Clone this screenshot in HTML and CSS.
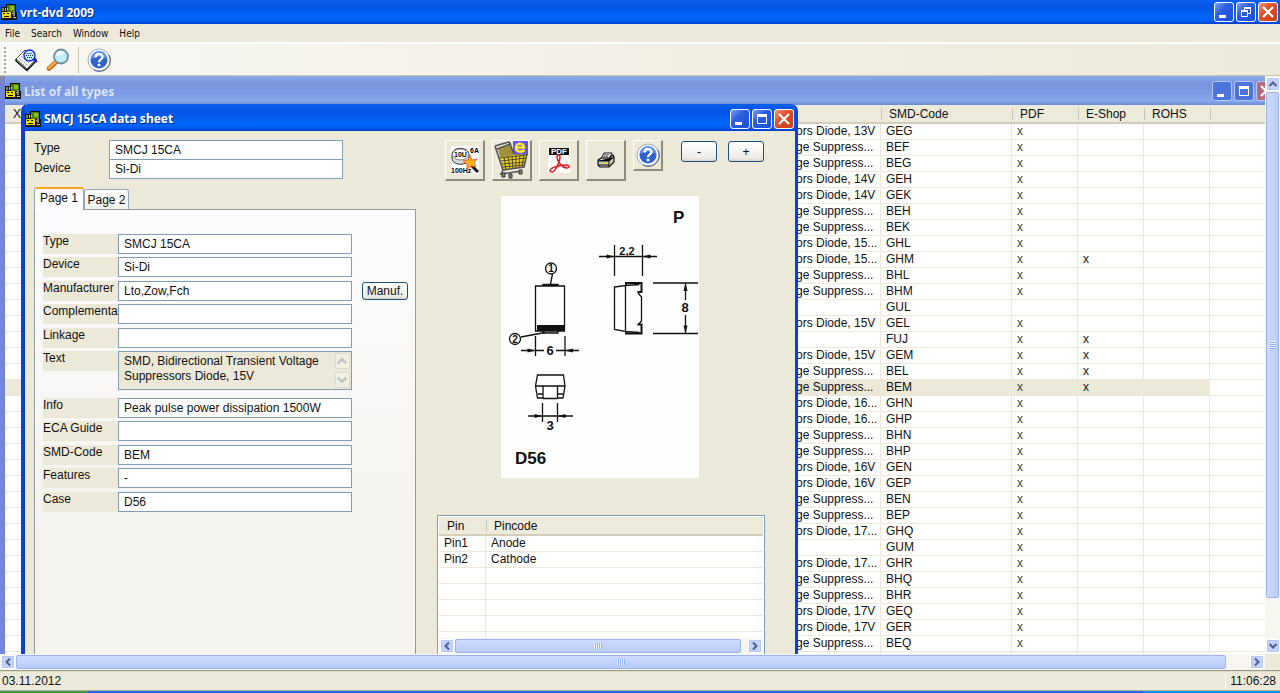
FILE: index.html
```html
<!DOCTYPE html>
<html lang="en">
<head>
    <meta charset="UTF-8">
    <meta name="viewport" content="width=device-width, initial-scale=1.0">
    <title>vrt-dvd 2009</title>
    <link rel="stylesheet" href="styles.css">
</head>
<body>
    <!-- shared icons -->
    <svg class="defs" width="0" height="0" aria-hidden="true">
        <symbol id="app" viewBox="0 0 16 16">
            <path fill="#111" d="M5 0h10v8h1v8H0V3h5z"/>
            <path fill="#4f7d12" d="M6 1h8v7H6z"/>
            <path fill="#8cc01e" d="M9 2h4v4H9z"/>
            <path fill="#ecdc00" d="M1 8h9v6H1z"/>
            <path fill="#8f8a10" d="M1 4h2v3H1z"/>
            <path fill="#111" d="M2 9h2v1H2zM6 9h2v1H6zM3 12h5v1H3z"/>
            <path fill="#c8c8c8" d="M4 4h1v3H4zM6 4h1v2H6zM11 9h3v1h-3zM12 13h3v1h-3z"/>
            <path fill="#858585" d="M12 7h2v5h-2z"/>
        </symbol>
        <symbol id="min" viewBox="0 0 18 18"><path fill="#fff" d="M4 12h7v3H4z"/></symbol>
        <symbol id="max" viewBox="0 0 18 18"><path fill="none" stroke="#fff" d="M4.500 4.500h9v9h-9z"/><path fill="#fff" d="M4 4h10v3H4z"/></symbol>
        <symbol id="restore" viewBox="0 0 18 18"><path fill="none" stroke="#fff" d="M4.500 8.500h6v5h-6zM7.500 7V4.500h6v6H11"/><path fill="#fff" d="M7 4h7v2H7zM4 7h7v2H4z"/></symbol>
        <symbol id="close" viewBox="0 0 18 18"><path stroke="#fff" stroke-width="2.200" d="M4 4l10 10M14 4L4 14"/></symbol>
        <symbol id="up" viewBox="0 0 10 10"><path fill="none" stroke="#4d6185" stroke-width="2" d="M1.500 7L5 3.500 8.500 7"/></symbol>
        <symbol id="down" viewBox="0 0 10 10"><path fill="none" stroke="#4d6185" stroke-width="2" d="M1.500 3L5 6.500 8.500 3"/></symbol>
        <symbol id="left" viewBox="0 0 10 10"><path fill="none" stroke="#4d6185" stroke-width="2" d="M7 1.500L3.500 5 7 8.500"/></symbol>
        <symbol id="right" viewBox="0 0 10 10"><path fill="none" stroke="#4d6185" stroke-width="2" d="M3 1.500L6.500 5 3 8.500"/></symbol>
        <symbol id="help" viewBox="0 0 24 24">
            <circle cx="12" cy="12" r="11" fill="#f4f7fd" stroke="#9aa9c8"/>
            <path fill="none" stroke="#56627c" d="M22 7a11 11 0 0 1-15 15"/>
            <circle cx="12" cy="12" r="8.500" fill="#2e63cc"/>
            <path fill="#5f8fe6" d="M4 11a8 8 0 0 1 16 0c-5-3-11-3-16 0z"/>
            <path fill="none" stroke="#fff" stroke-width="2.400" d="M8.500 9.500c0-4.500 7-4.500 7-.5 0 2.500-3.500 2.300-3.500 5.200"/>
            <path fill="#fff" d="M10.700 15.800h2.600v2.400h-2.600z"/>
        </symbol>
    </svg>

    <header class="titlebar">
        <svg class="icon16"><use href="#app"/></svg>
        <h1>vrt-dvd 2009</h1>
        <button class="cap" aria-label="Minimize"><svg><use href="#min"/></svg></button>
        <button class="cap" aria-label="Restore"><svg><use href="#restore"/></svg></button>
        <button class="cap cap-close" aria-label="Close"><svg><use href="#close"/></svg></button>
    </header>

    <nav class="menubar">
        <button>File</button>
        <button>Search</button>
        <button>Window</button>
        <button>Help</button>
    </nav>

    <div class="toolbar">
        <span class="grip"></span>
        <button class="tool" aria-label="Types">
            <svg viewBox="0 0 24 24">
                <path fill="#fff" stroke="#444" d="M2 11L11 2l11 9-9 10z"/>
                <path fill="none" stroke="#111" stroke-width="1.400" d="M2 11v2l11 9.500L22 13v-2"/>
                <path stroke="#888" stroke-dasharray="2 1" d="M5 10l8 7M7 8l8 7M9 6l8 7M4.500 12.500l7 6"/>
                <circle cx="15.500" cy="7.500" r="5.500" fill="#bdf3ff" stroke="#1426e0" stroke-width="1.400"/>
                <path stroke="#224" stroke-dasharray="1 1" d="M12.500 5.500h6M12 7.500h7M13 9.500h5"/>
                <path stroke="#1426e0" stroke-width="2" d="M19 11l4 3"/>
            </svg>
        </button>
        <button class="tool" aria-label="Search">
            <svg viewBox="0 0 24 24">
                <path stroke="#a8621c" stroke-width="4.500" stroke-linecap="round" d="M10 14l-7 6.500"/>
                <path stroke="#f7a544" stroke-width="3" stroke-linecap="round" d="M9.500 14L3 20"/>
                <circle cx="15" cy="8.500" r="7" fill="#c5ecfa" stroke="#6f8fa6" stroke-width="1.800"/>
                <path fill="#eefaff" d="M10 8a5 5 0 0 1 8-4c-1 3-4 4-8 4z"/>
            </svg>
        </button>
        <span class="sep"></span>
        <button class="tool" aria-label="Help"><svg><use href="#help"/></svg></button>
    </div>

    <main class="mdi">
        <div class="desktop">
            <section class="window list">
                <header class="titlebar inactive">
                    <svg class="icon16"><use href="#app"/></svg>
                    <h2>List of all types</h2>
                    <button class="cap" aria-label="Minimize"><svg><use href="#min"/></svg></button>
                    <button class="cap" aria-label="Maximize"><svg><use href="#max"/></svg></button>
                    <button class="cap cap-close" aria-label="Close"><svg><use href="#close"/></svg></button>
                </header>
                <table class="grid types">
                    <colgroup><col class="c-x"><col class="c-hidden"><col class="c-text"><col class="c-smd"><col class="c-flag"><col class="c-flag"><col class="c-flag"><col></colgroup>
                    <thead>
                        <tr><th>X</th><th></th><th></th><th>SMD-Code</th><th>PDF</th><th>E-Shop</th><th>ROHS</th><th></th></tr>
                    </thead>
                    <tbody>
                        <tr><td></td><td></td><td>ors Diode, 13V</td><td>GEG</td><td>x</td><td></td><td></td><td></td></tr>
                        <tr><td></td><td></td><td>ge Suppress...</td><td>BEF</td><td>x</td><td></td><td></td><td></td></tr>
                        <tr><td></td><td></td><td>ge Suppress...</td><td>BEG</td><td>x</td><td></td><td></td><td></td></tr>
                        <tr><td></td><td></td><td>ors Diode, 14V</td><td>GEH</td><td>x</td><td></td><td></td><td></td></tr>
                        <tr><td></td><td></td><td>ors Diode, 14V</td><td>GEK</td><td>x</td><td></td><td></td><td></td></tr>
                        <tr><td></td><td></td><td>ge Suppress...</td><td>BEH</td><td>x</td><td></td><td></td><td></td></tr>
                        <tr><td></td><td></td><td>ge Suppress...</td><td>BEK</td><td>x</td><td></td><td></td><td></td></tr>
                        <tr><td></td><td></td><td>ors Diode, 15...</td><td>GHL</td><td>x</td><td></td><td></td><td></td></tr>
                        <tr><td></td><td></td><td>ors Diode, 15...</td><td>GHM</td><td>x</td><td>x</td><td></td><td></td></tr>
                        <tr><td></td><td></td><td>ge Suppress...</td><td>BHL</td><td>x</td><td></td><td></td><td></td></tr>
                        <tr><td></td><td></td><td>ge Suppress...</td><td>BHM</td><td>x</td><td></td><td></td><td></td></tr>
                        <tr><td></td><td></td><td></td><td>GUL</td><td></td><td></td><td></td><td></td></tr>
                        <tr><td></td><td></td><td>ors Diode, 15V</td><td>GEL</td><td>x</td><td></td><td></td><td></td></tr>
                        <tr><td></td><td></td><td></td><td>FUJ</td><td>x</td><td>x</td><td></td><td></td></tr>
                        <tr><td></td><td></td><td>ors Diode, 15V</td><td>GEM</td><td>x</td><td>x</td><td></td><td></td></tr>
                        <tr><td></td><td></td><td>ge Suppress...</td><td>BEL</td><td>x</td><td>x</td><td></td><td></td></tr>
                        <tr class="selected"><td></td><td></td><td>ge Suppress...</td><td>BEM</td><td>x</td><td>x</td><td></td><td></td></tr>
                        <tr><td></td><td></td><td>ors Diode, 16...</td><td>GHN</td><td>x</td><td></td><td></td><td></td></tr>
                        <tr><td></td><td></td><td>ors Diode, 16...</td><td>GHP</td><td>x</td><td></td><td></td><td></td></tr>
                        <tr><td></td><td></td><td>ge Suppress...</td><td>BHN</td><td>x</td><td></td><td></td><td></td></tr>
                        <tr><td></td><td></td><td>ge Suppress...</td><td>BHP</td><td>x</td><td></td><td></td><td></td></tr>
                        <tr><td></td><td></td><td>ors Diode, 16V</td><td>GEN</td><td>x</td><td></td><td></td><td></td></tr>
                        <tr><td></td><td></td><td>ors Diode, 16V</td><td>GEP</td><td>x</td><td></td><td></td><td></td></tr>
                        <tr><td></td><td></td><td>ge Suppress...</td><td>BEN</td><td>x</td><td></td><td></td><td></td></tr>
                        <tr><td></td><td></td><td>ge Suppress...</td><td>BEP</td><td>x</td><td></td><td></td><td></td></tr>
                        <tr><td></td><td></td><td>ors Diode, 17...</td><td>GHQ</td><td>x</td><td></td><td></td><td></td></tr>
                        <tr><td></td><td></td><td></td><td>GUM</td><td>x</td><td></td><td></td><td></td></tr>
                        <tr><td></td><td></td><td>ors Diode, 17...</td><td>GHR</td><td>x</td><td></td><td></td><td></td></tr>
                        <tr><td></td><td></td><td>ge Suppress...</td><td>BHQ</td><td>x</td><td></td><td></td><td></td></tr>
                        <tr><td></td><td></td><td>ge Suppress...</td><td>BHR</td><td>x</td><td></td><td></td><td></td></tr>
                        <tr><td></td><td></td><td>ors Diode, 17V</td><td>GEQ</td><td>x</td><td></td><td></td><td></td></tr>
                        <tr><td></td><td></td><td>ors Diode, 17V</td><td>GER</td><td>x</td><td></td><td></td><td></td></tr>
                        <tr><td></td><td></td><td>ge Suppress...</td><td>BEQ</td><td>x</td><td></td><td></td><td></td></tr>
                        <tr><td></td><td></td><td>ge Suppress...</td><td>BER</td><td></td><td></td><td></td><td></td></tr>
                    </tbody>
                </table>
            </section>

            <section class="window sheet">
                <header class="titlebar">
                    <svg class="icon16"><use href="#app"/></svg>
                    <h2>SMCJ 15CA data sheet</h2>
                    <button class="cap" aria-label="Minimize"><svg><use href="#min"/></svg></button>
                    <button class="cap" aria-label="Maximize"><svg><use href="#max"/></svg></button>
                    <button class="cap cap-close" aria-label="Close"><svg><use href="#close"/></svg></button>
                </header>
                <div class="sheet-body">
                    <div class="details">
                        <div class="summary">
                            <label for="s-type">Type</label><input id="s-type" value="SMCJ 15CA">
                            <label for="s-device">Device</label><input id="s-device" value="Si-Di">
                        </div>
                        <div class="tabs">
                            <button class="tab active">Page 1</button>
                            <button class="tab">Page 2</button>
                        </div>
                        <form class="panel">
                            <div class="row"><label for="f-type">Type</label><input id="f-type" value="SMCJ 15CA"></div>
                            <div class="row"><label for="f-device">Device</label><input id="f-device" value="Si-Di"></div>
                            <div class="row"><label for="f-manuf">Manufacturer</label><input id="f-manuf" value="Lto,Zow,Fch"><button type="button" class="btn manuf">Manuf.</button></div>
                            <div class="row"><label for="f-compl">Complementa</label><input id="f-compl"></div>
                            <div class="row"><label for="f-link">Linkage</label><input id="f-link"></div>
                            <div class="row row-text">
                                <label for="f-text">Text</label>
                                <div class="memo">
                                    <textarea id="f-text" readonly>SMD, Bidirectional Transient Voltage Suppressors Diode, 15V</textarea>
                                    <div class="memo-scroll">
                                        <button type="button" aria-label="Scroll up"><svg><use href="#up"/></svg></button>
                                        <button type="button" aria-label="Scroll down"><svg><use href="#down"/></svg></button>
                                    </div>
                                </div>
                            </div>
                            <div class="row"><label for="f-info">Info</label><input id="f-info" value="Peak pulse power dissipation 1500W"></div>
                            <div class="row"><label for="f-eca">ECA Guide</label><input id="f-eca"></div>
                            <div class="row"><label for="f-smd">SMD-Code</label><input id="f-smd" value="BEM"></div>
                            <div class="row"><label for="f-feat">Features</label><input id="f-feat" value="-"></div>
                            <div class="row"><label for="f-case">Case</label><input id="f-case" value="D56"></div>
                        </form>
                    </div>

                    <div class="side">
                        <div class="actions">
                            <button class="big" aria-label="Parameter search">
                                <svg viewBox="0 0 28 28">
                                    <path fill="#fff" d="M0 0h28v28H0z"/>
                                    <path fill="#ddd" stroke="#333" d="M1 9c0-9 17-9 17 0v4c-1 7-16 7-17 0z"/>
                                    <ellipse cx="9.500" cy="8.500" rx="8" ry="5.500" fill="#fff" stroke="#777"/>
                                    <text x="3" y="11" font-size="7">10U</text>
                                    <text x="19" y="7" font-size="7">6A</text>
                                    <text x="0" y="27" font-size="7">100Hz</text>
                                    <path stroke="#111" stroke-width="3" d="M20 19l7 7"/>
                                    <path fill="#ffb21c" stroke="#f0501c" stroke-width=".8" d="M19 9l2 5 5-1-3 4 2 4-5-1-4 3v-5l-4-3 5-1z"/>
                                </svg>
                            </button>
                            <button class="big" aria-label="E-Shop">
                                <svg class="cart" viewBox="0 0 36 38">
                                    <path fill="#6652f0" d="M19 0h15v14H19z"/>
                                    <path fill="#a08f3c" d="M4 8l12-5 4 10 13 1-3 12-21 2z"/>
                                    <path fill="#ecd12c" d="M6 16l27-3-3 13-21 3z"/>
                                    <path fill="none" stroke="#54481a" stroke-width="1" d="M6 17l27-3M7 20l25-3M8 23l23-2M9 26l21-2M10 16l2 13M14 15l2 13M18 15l1 13M22 14l0 13M26 14l-1 13M30 13l-2 13"/>
                                    <path fill="none" stroke="#55555c" stroke-width="1.600" d="M1 5l14-4 2 3M1 5l8 24 21-3 3-13M9 29l-2 4 21-3M3 8l13-5 4 10"/>
                                    <path fill="none" stroke="#ffe92a" stroke-width="2.600" d="M23 6.500h7c0-5-8-5-8 0s6 5 8.500 2.500"/>
                                    <path fill="#888" stroke="#333" d="M8 32h3v4H8zM15 33h3v4h-3zM25 29h3v4h-3z"/>
                                </svg>
                            </button>
                            <button class="big" aria-label="PDF">
                                <svg viewBox="0 0 28 28">
                                    <path fill="#fff" d="M3 2h22v25H3z"/>
                                    <path fill="#111" d="M4 2h20v7H4z"/>
                                    <text x="6" y="8" font-size="8" fill="#fff">PDF</text>
                                    <circle cx="14" cy="18" r="8" fill="none" stroke="#d8b080" stroke-dasharray="1 2"/>
                                    <path fill="none" stroke="#e01c24" stroke-width="1.500" d="M5 25c0-3 8-6 16-6 4 0 4 3 1 3-4 0-10-6-10-11 0-3 3-3 3 0 0 5-5 15-8 15-2 0-2-1-2-1z"/>
                                </svg>
                            </button>
                            <button class="big" aria-label="Print">
                                <svg viewBox="0 0 28 28">
                                    <path fill="#fff" stroke="#111" d="M9 13l3-6h8l-3 6z"/>
                                    <path stroke="#333" d="M12 9h5M11 11h5"/>
                                    <path fill="#c8c8c0" stroke="#111" stroke-width="1.200" d="M6 14l3-2h8l4-3 1 2v5l-5 5H8l-2-2z"/>
                                    <path stroke="#111" d="M6 15h11l5-4M7 19h10M17 15v6"/>
                                    <path stroke="#f0e020" stroke-width="1.500" d="M12 17h3"/>
                                </svg>
                            </button>
                            <button class="big small" aria-label="Help"><svg><use href="#help"/></svg></button>
                            <button class="btn step">-</button>
                            <button class="btn step">+</button>
                        </div>

                        <!-- package outline -->
                        <svg class="outline" viewBox="0 0 198 282" role="img" aria-label="Case D56">
                            <g fill="none" stroke="#111" stroke-width="1.300">
                                <path d="M34.500 90h29v45h-29zM42 90v-1.500h15V90M42 135v2h15v-2"/>
                                <circle cx="50" cy="72.500" r="5.500"/>
                                <path d="M49.500 88l2-10"/>
                                <circle cx="14" cy="143" r="5.500"/>
                                <path d="M20 141l24-4.500"/>
                                <path d="M34.500 140v20M64 140v20M20 154.500h23M55 154.500h23"/>
                                <path d="M36.500 179h26l1.500 11-2 12h-5.500V190H42v12h-5.500l-2-12zM34.500 190H64M42 202.500h14.500M37 198h5M57 198h5"/>
                                <path d="M41.500 207v19M56.500 207v19M27 220h45"/>
                                <path d="M113.500 49v31M141.500 49v31M98 60.500h58"/>
                                <path d="M113.500 91l11-1.500v46l-11-2zM124.500 89.500l14-1M124.500 135.500l14 1M137 97l3.500 4v24l-3.500 4"/>
                                <path stroke-width="2" d="M125 90v-3h15.500v9h-4M125 135v2.500h15.500v-9h-4"/>
                                <path d="M152 87h45M152 137.500h45M184.500 87v17M184.500 119v18"/>
                            </g>
                            <g fill="#111">
                                <path d="M36 129h27v6H36z"/>
                                <path d="M34.500 154.500l-8-2v4zM64 154.500l8-2v4zM41.500 220l-8-2v4zM56.500 220l8-2v4zM113.500 60.500l-8-2v4zM141.500 60.500l8-2v4zM184.500 87l-2 8h4zM184.500 137.500l-2-8h4z"/>
                                <text x="50" y="76" font-size="10" text-anchor="middle">1</text>
                                <text x="14" y="147" font-size="10" text-anchor="middle">2</text>
                                <text x="49" y="159" font-size="13" text-anchor="middle">6</text>
                                <text x="49" y="234" font-size="13" text-anchor="middle">3</text>
                                <text x="126" y="59" font-size="11" text-anchor="middle">2,2</text>
                                <text x="184" y="116" font-size="13" text-anchor="middle">8</text>
                                <text x="172" y="27" font-size="17">P</text>
                                <text x="14" y="268" font-size="17">D56</text>
                            </g>
                        </svg>

                        <div class="pins">
                            <table class="grid">
                                <colgroup><col class="c-pin"><col></colgroup>
                                <thead><tr><th>Pin</th><th>Pincode</th></tr></thead>
                                <tbody>
                                    <tr><td>Pin1</td><td>Anode</td></tr>
                                    <tr><td>Pin2</td><td>Cathode</td></tr>
                                    <tr><td></td><td></td></tr>
                                    <tr><td></td><td></td></tr>
                                    <tr><td></td><td></td></tr>
                                    <tr><td></td><td></td></tr>
                                    <tr class="cut"><td></td><td></td></tr>
                                </tbody>
                            </table>
                            <div class="scroll">
                                <button class="arrow" aria-label="Scroll left"><svg><use href="#left"/></svg></button>
                                <span class="thumb"></span>
                                <span class="track"></span>
                                <button class="arrow" aria-label="Scroll right"><svg><use href="#right"/></svg></button>
                            </div>
                        </div>
                    </div>
                </div>
            </section>
        </div>

        <div class="scroll vertical">
            <button class="arrow" aria-label="Scroll up"><svg><use href="#up"/></svg></button>
            <span class="thumb"></span>
            <span class="track"></span>
            <button class="arrow" aria-label="Scroll down"><svg><use href="#down"/></svg></button>
        </div>
        <div class="scroll wide">
            <button class="arrow" aria-label="Scroll left"><svg><use href="#left"/></svg></button>
            <span class="thumb"></span>
            <span class="track"></span>
            <button class="arrow" aria-label="Scroll right"><svg><use href="#right"/></svg></button>
        </div>
    </main>

    <footer class="status">
        <span>03.11.2012</span>
        <span class="clock">11:06:28</span>
    </footer>
    <div class="taskbar"><span class="start"></span><span class="tasks"></span><span class="tray"></span></div>
</body>
</html>
```
FILE: styles.css
```css
* { box-sizing: border-box; }
body { margin: 0; height: 100vh; display: flex; flex-direction: column; overflow: hidden; background: #ece9d8; color: #111; font: 12px "Liberation Sans", Arial, sans-serif; }
button, input, textarea { font: inherit; color: inherit; margin: 0; padding: 0; border-radius: 0; }
button { border: 0; background: none; }
.defs { position: absolute; }

/* title bars */
.titlebar { display: flex; align-items: center; flex: none; gap: 2px; height: 24px; padding: 0 2px 0 1px; background: linear-gradient(#0a5ff0, #0353e4 30%, #0066ff 75%, #0058ee 90%, #003dc8); }
.titlebar h1, .titlebar h2 { flex: 1; margin: 0; padding-left: 1px; font: bold 12px "Noto Sans", "Open Sans", sans-serif; color: #fff; text-shadow: 1px 1px #0a2a80; }
.icon16 { width: 16px; height: 16px; }
.cap { width: 20px; height: 20px; flex: none; border: 1px solid #fff; border-radius: 3px; background: linear-gradient(135deg, #7ba2f5, #2b5ee0 40%, #1a4fd8); }
.cap svg { display: block; width: 18px; height: 18px; }
.cap-close { background: linear-gradient(135deg, #f09a7c, #e0502c 40%, #c93c10); }
.inactive { background: linear-gradient(#8ea9ea, #7a96df 25%, #7b9be5 60%, #86a8ee 85%, #6c8cd6); }
.titlebar.inactive h2 { color: #dbe4fa; text-shadow: none; }
.inactive .cap { border-color: #b4c6f4; background: #4c74dc; }
.inactive .cap-close { background: #b56a80; }

/* menu and toolbar */
.menubar { display: flex; flex: none; height: 20px; padding: 0 5px; gap: 11px; border-bottom: 2px solid #fff; font: 10px "DejaVu Sans Condensed", "Noto Sans", sans-serif; }
.toolbar { display: flex; align-items: center; flex: none; height: 32px; padding: 1px 4px; gap: 8px; background: linear-gradient(90deg, #f8f7f3, #ece9d8); border-bottom: 1px solid #c9c6b4; }
.grip { width: 2px; height: 26px; background: repeating-linear-gradient(#a9a695 0 2px, transparent 2px 4px); }
.tool { width: 24px; height: 24px; }
.tool svg { display: block; width: 24px; height: 24px; }
.sep { width: 1px; height: 26px; background: #c9c6b4; }

/* mdi area */
.mdi { flex: 1; min-height: 0; display: grid; grid-template: minmax(0, 1fr) 16px / minmax(0, 1fr) 15px; border-bottom: 1px solid #9c9a8c; }
.desktop { position: relative; overflow: hidden; background: #8a8a86; }
.window { position: absolute; border-radius: 7px 7px 0 0; overflow: hidden; }
.list { top: 0; left: 0; right: -11px; bottom: -20px; border-left: 5px solid #7186dc; background: #fff; }
.list .titlebar { height: 29px; padding: 1px 0 0; }
.sheet { top: 28px; left: 21px; width: 777px; bottom: -20px; display: flex; flex-direction: column; border: solid #0a3fd8; border-width: 0 3px 0 4px; background: #ece9d8; }
.sheet .titlebar { height: 27px; padding: 2px 1px 0 0; }

/* tables */
.grid { width: 100%; border-collapse: separate; border-spacing: 0; table-layout: fixed; background: #fff; }
.grid th { height: 19px; padding: 0 0 0 8px; font-weight: normal; text-align: left; background: #ebeadb; border-bottom: 2px solid #d2cebb; }
.grid th + th { background: linear-gradient(#c9c6b4, #c9c6b4) 0 3px / 1px 12px no-repeat #ebeadb; }
.grid td { height: 16px; padding: 0 0 0 5px; line-height: 15px; white-space: nowrap; border-bottom: 1px solid #ece9dc; border-right: 1px solid #ece9dc; }
.types .selected td { background: #ece9d8; }
.types .selected td:last-child { background: #fff; }
.types td:nth-child(3) { padding-left: 6px; }
.types td:nth-child(5) { color: #444; }
.c-x { width: 24px; }
.c-hidden { width: 761px; }
.c-text { width: 91px; }
.c-smd { width: 131px; }
.c-flag { width: 66px; }
.c-pin { width: 47px; }

/* data sheet */
.sheet-body { flex: 1; display: flex; gap: 21px; padding: 9px 30px 0 9px; min-height: 0; }
.details { width: 382px; display: flex; flex-direction: column; }
.summary { display: grid; grid-template-columns: 75px 234px; }
.summary label { line-height: 17px; }
input { border: 1px solid #7f9db9; background: #fff; padding: 0 5px; height: 20px; width: 234px; outline: 0; }
.summary input + label + input { border-top: 0; height: 19px; }
.tabs { display: flex; align-items: flex-end; height: 22px; margin-top: 8px; }
.tab { width: 45px; height: 20px; border: 1px solid #91a7b4; border-bottom: 0; border-radius: 3px 3px 0 0; background: linear-gradient(#fff, #f0f0ea); }
.tab.active { width: 50px; height: 23px; margin-bottom: -1px; padding-bottom: 4px; border-top: 2px solid #f5a623; background: #fcfcfe; z-index: 1; }
.panel { flex: 1; padding: 24px 7px 0 8px; border: 1px solid #919b9c; background: linear-gradient(#fcfcfe, #f4f3ee 70%); }
.row { display: flex; }
.row:nth-child(even) { margin-top: 3px; }
.row:nth-child(odd) { margin-top: 4px; }
.row:first-child { margin-top: 0; }
.row label { width: 75px; height: 20px; overflow: hidden; line-height: 15px; background: #ece9d8; }
.row-text { height: 43px; }
.memo { display: flex; width: 234px; height: 39px; border: 1px solid #7f9db9; background: #ece9d8; }
.memo textarea { flex: 1; padding: 2px 0 0 5px; border: 0; outline: 0; resize: none; overflow: hidden; line-height: 15px; background: none; }
.memo-scroll { display: flex; flex-direction: column; justify-content: space-between; padding: 1px; }
.memo-scroll button { width: 15px; height: 16px; border: 1px solid #cfccb8; border-radius: 2px; background: #f8f7f0; opacity: .5; }
.memo-scroll svg { display: block; width: 12px; height: 12px; opacity: .6; }
.btn { border: 1px solid #1c4f82; border-radius: 3px; background: linear-gradient(#fff, #ecebe5 85%, #d6d0c5); }
.manuf { width: 46px; height: 18px; margin: 1px 0 0 10px; }

.side { flex: 1; display: flex; flex-direction: column; }
.actions { display: flex; gap: 7px; padding-left: 8px; }
.big { width: 40px; height: 41px; display: grid; place-items: center; border: solid; border-width: 1px 2px 2px 1px; border-color: #fff #8f8c7e #8f8c7e #fff; }
.big svg { width: 28px; height: 28px; font: bold 7px "Liberation Sans", Arial, sans-serif; }
.big .cart { width: 36px; height: 38px; }
.small { width: 30px; height: 31px; }
.small svg { width: 24px; height: 24px; }
.step { width: 36px; height: 21px; margin: 1px 0 0 4px; }
.step:nth-of-type(6) { margin-left: 11px; }
.outline { width: 198px; height: 282px; margin: 15px 0 0 64px; background: #fefefe; font: bold 13px "Liberation Sans", Arial, sans-serif; }
.pins { margin-top: 37px; border: 1px solid #7f9db9; background: #fff; padding: 1px; }
.pins .cut td { height: 6px; border-bottom: 0; }
.pins td:last-child { border-right: 0; }

/* scroll bars */
.scroll { display: flex; gap: 1px; height: 16px; padding: 1px; background: #f6f5f0; }
.arrow { width: 14px; height: 14px; flex: none; display: grid; place-items: center; border: 1px solid #fff; border-radius: 2px; background: #c3d3fd; box-shadow: inset 0 0 0 1px #b4c8f6; }
.arrow svg { width: 10px; height: 10px; }
.thumb { flex: 54; border: 1px solid #9cb4ec; border-radius: 2px; background: repeating-linear-gradient(90deg, #eef4fe 0 1px, #8cb0f8 1px 2px) center / 8px 6px no-repeat, linear-gradient(#cddbff, #b8cbf9); }
.track { flex: 1; }
.vertical { flex-direction: column; width: 15px; height: auto; }
.vertical .thumb { flex: 13; background: repeating-linear-gradient(#eef4fe 0 1px, #8cb0f8 1px 2px) center / 6px 8px no-repeat, linear-gradient(90deg, #cddbff, #b8cbf9); }

/* bottom bars */
.status { display: flex; flex: none; justify-content: space-between; align-items: center; height: 20px; padding: 0 4px 0 2px; border-top: 1px solid #dcd9c8; border-bottom: 1px solid #b4b1a0; }
.clock { padding-left: 4px; border-left: 1px solid #fff; }
.taskbar { display: flex; flex: none; height: 2px; }
.start { width: 88px; background: #3c9c3c; }
.tasks { flex: 1; background: #2468e8; }
.tray { width: 137px; background: #1290ee; }
```
